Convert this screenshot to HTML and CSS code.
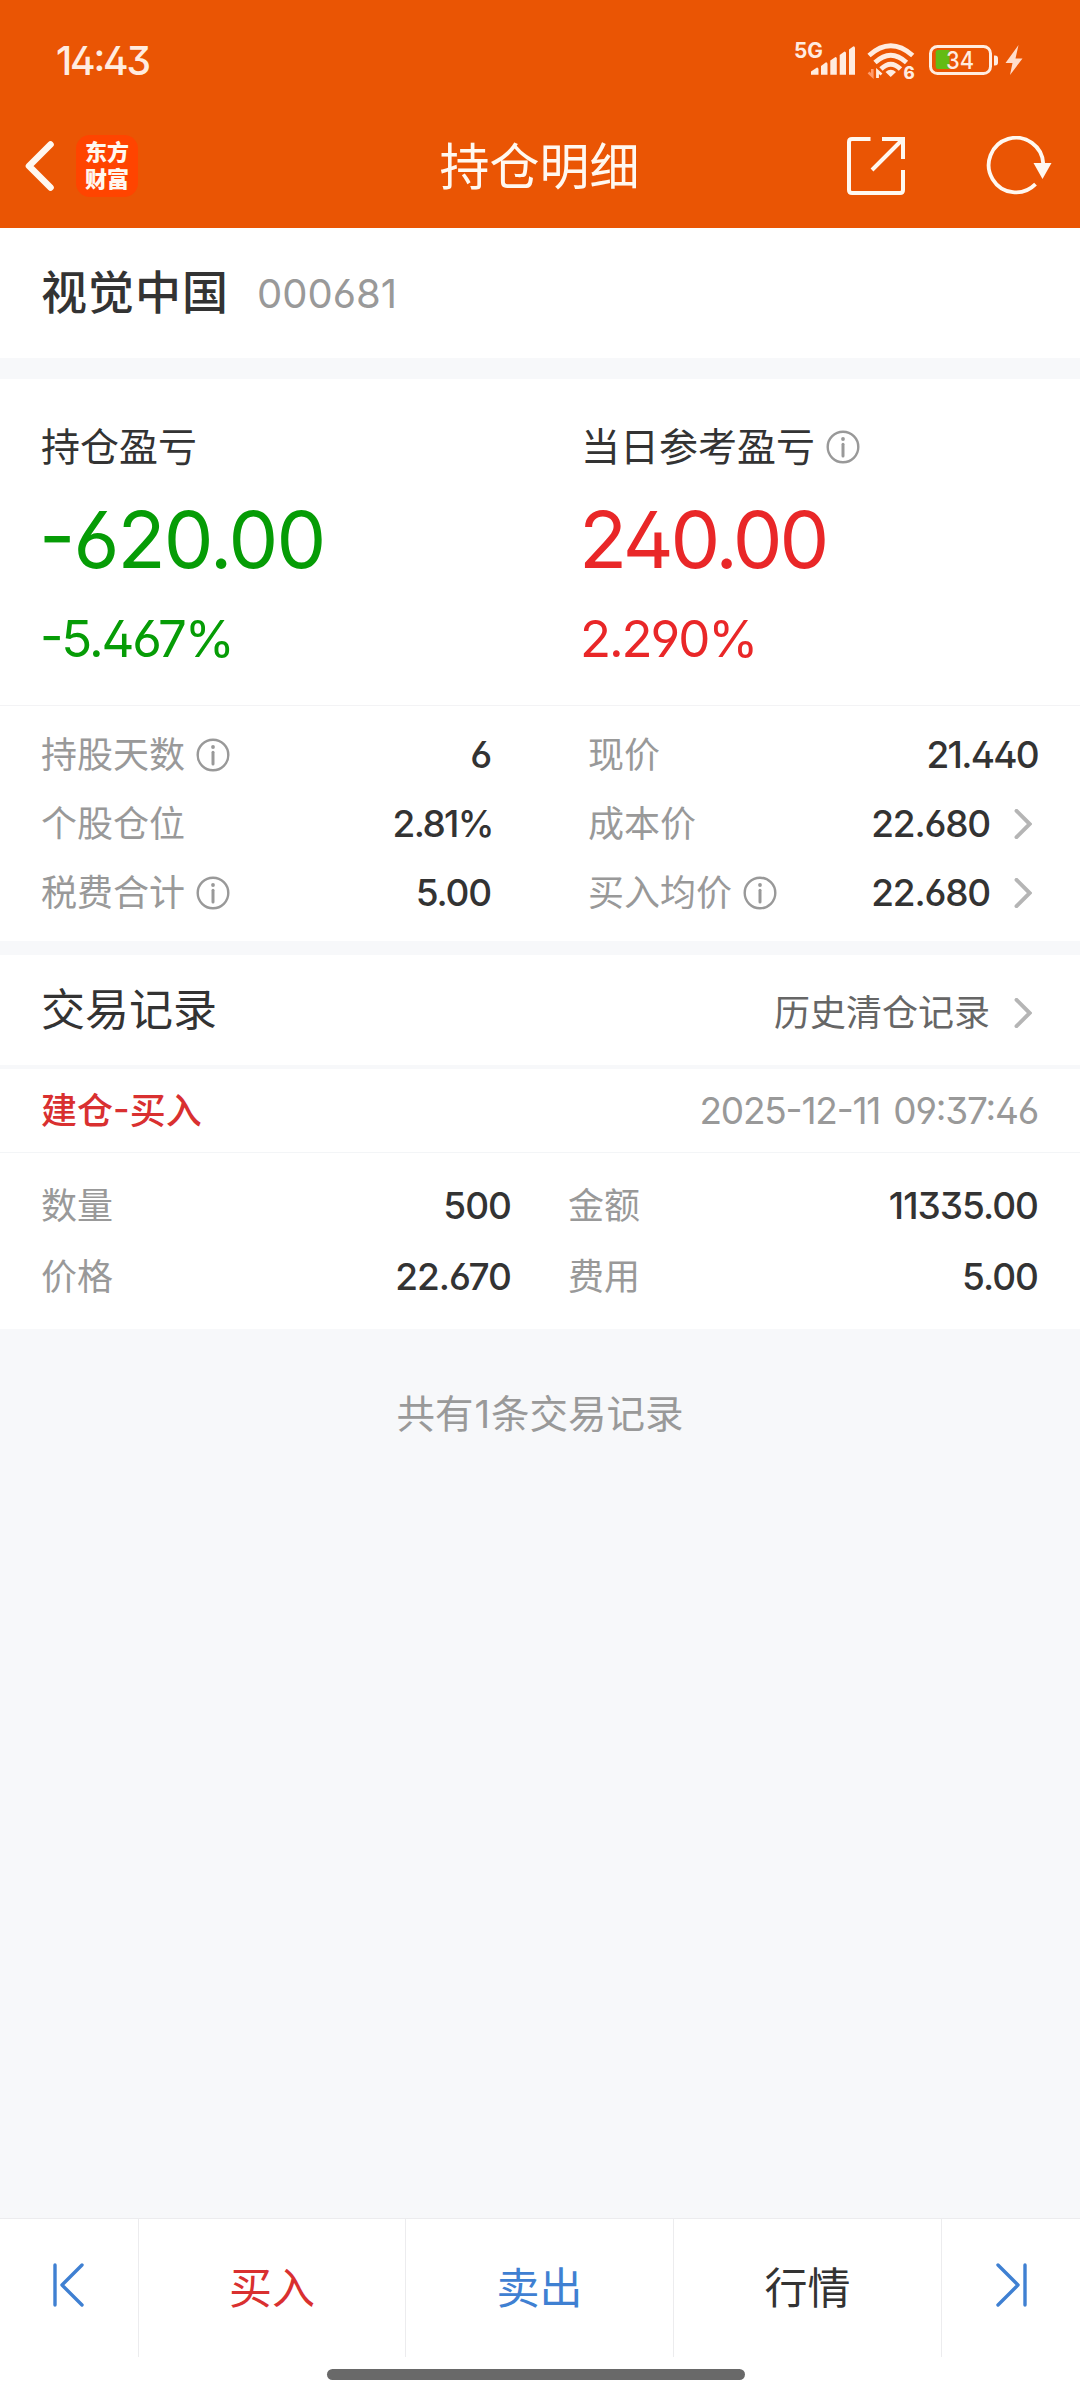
FILE: index.html
```html
<!DOCTYPE html>
<html lang="zh-CN">
<head>
<meta charset="utf-8">
<title>持仓明细</title>
<link rel="stylesheet" href="styles.css">
</head>
<body>
<svg class="defs" width="0" height="0">
  <symbol id="info" viewBox="0 0 34 34"><circle cx="17" cy="17" r="15.3" fill="none" stroke="#999" stroke-width="2.4"/><circle cx="17" cy="9" r="1.9" fill="#999"/><path d="M17 14.2V26" stroke="#999" stroke-width="3" stroke-linecap="round"/></symbol>
  <symbol id="more" viewBox="0 0 18 30"><path d="M2.500 1.800L15.700 15L2.500 28.200" fill="none" stroke="#b5b5b5" stroke-width="3.9" stroke-linecap="round"/></symbol>
</svg>
<div class="screen">
  <header class="top">
    <div class="status">
      <span class="time num">14:43</span>
      <svg class="status-icons" width="235" height="54" viewBox="0 0 235 54">
        <text class="net" x="4" y="22" textLength="29" lengthAdjust="spacingAndGlyphs">5G</text>
        <text class="wifi-gen" x="113.500" y="42.500">6</text>
        <g transform="translate(-790 -36)">
          <g fill="#ffece0">
            <path d="M811 74.7V71.5L817 67.5Q818.5 67.5 818.5 69.500V74.7z"/>
            <path d="M821 74.7V66L826 62.3Q827.500 62.3 827.500 64V74.7z"/>
            <path d="M830.300 74.7V60.500L835.500 57Q836.800 57 836.800 58.500V74.7z"/>
            <path d="M839.700 74.7V55L844.500 51.500Q846 51.500 846 53V74.7z"/>
            <path d="M849 74.7V49.500L853.500 46.200Q855 46.200 855 48V74.7z"/>
          </g>
          <g fill="none" stroke="#ffece0" stroke-width="4.800">
            <path d="M869 55.500Q890.700 36 912.700 55.500"/>
            <path d="M875 62.500Q890.700 48 906.500 62.500"/>
            <path d="M881 69Q890.700 59.500 900.500 69"/>
          </g>
          <path d="M885.500 72Q890.700 67.500 896 72L890.700 77z" fill="#ffece0"/>
          <path d="M872.300 69V76L868.500 72.500" fill="none" stroke="#ff9b6b" stroke-width="2.600"/>
          <path d="M877.500 78V71L881.500 74.500" fill="none" stroke="#ffece0" stroke-width="2.800"/>
          <rect x="930.500" y="46.500" width="60" height="27" rx="7" fill="none" stroke="#ffece0" stroke-width="3"/>
          <path d="M938 50H949.500V69H938Q935.700 69 935.700 66.700V52.300Q935.700 50 938 50z" fill="#63bb14"/>
          <path d="M994 55.500H995Q998 55.500 998 58.500V62.500Q998 65.500 995 65.500H994z" fill="#ffece0"/>
          <path d="M1018.500 45L1005.500 63H1012.500L1010 75L1022.500 58.500H1015.500z" fill="#ffdccb"/>
        </g>
        <text class="level" x="156" y="33.300" textLength="28" lengthAdjust="spacingAndGlyphs">34</text>
      </svg>
    </div>
    <div class="nav">
      <div class="nav-left">
        <svg width="34" height="54" viewBox="0 0 34 54"><path d="M28.500 5.500L7 27L28.500 48.500" fill="none" stroke="#fff8f0" stroke-width="6.600" stroke-linecap="round" stroke-linejoin="round"/></svg>
        <div class="logo"><span>东方</span><span>财富</span></div>
      </div>
      <h1>持仓明细</h1>
      <div class="nav-right">
        <svg width="58" height="58" viewBox="0 0 58 58" fill="none" stroke="#fff8f0" stroke-width="4"><path d="M23.500 2H5Q2 2 2 5V53Q2 56 5 56H53Q56 56 56 53V33"/><path d="M35 2H56V22M55 3L25 33"/></svg>
        <svg width="68" height="60" viewBox="0 0 68 60"><path d="M49.500 48.200A27.300 27.300 0 1 1 57.300 28" fill="none" stroke="#fff8f0" stroke-width="3.800"/><path d="M47.500 27H65.500L56.500 43z" fill="#fff8f0"/></svg>
      </div>
    </div>
  </header>

  <section class="stock"><span class="stock-name">视觉中国</span><span class="stock-code num">000681</span></section>

  <section class="profit">
    <div class="profit-col down">
      <div class="profit-label">持仓盈亏</div>
      <div class="amount num">-620.00</div>
      <div class="percent num">-5.467%</div>
    </div>
    <div class="profit-col up">
      <div class="profit-label">当日参考盈亏<svg class="info"><use href="#info"/></svg></div>
      <div class="amount num">240.00</div>
      <div class="percent num">2.290%</div>
    </div>
  </section>

  <section class="details">
    <div class="row"><span class="label">持股天数</span><svg class="info"><use href="#info"/></svg><span class="value num">6</span></div>
    <div class="row"><span class="label">现价</span><span class="value num">21.440</span></div>
    <div class="row"><span class="label">个股仓位</span><span class="value rate num">2.81%</span></div>
    <div class="row"><span class="label">成本价</span><span class="value num">22.680</span><svg class="more"><use href="#more"/></svg></div>
    <div class="row"><span class="label">税费合计</span><svg class="info"><use href="#info"/></svg><span class="value num">5.00</span></div>
    <div class="row"><span class="label">买入均价</span><svg class="info"><use href="#info"/></svg><span class="value num">22.680</span><svg class="more"><use href="#more"/></svg></div>
  </section>

  <section class="records-head"><h2>交易记录</h2><span class="history">历史清仓记录</span><svg class="more"><use href="#more"/></svg></section>

  <section class="record">
    <div class="record-head"><span class="kind">建仓<i class="num">-</i>买入</span><span class="date num">2025-12-11 09:37:46</span></div>
    <div class="record-body">
      <div class="row"><span class="label">数量</span><span class="value num">500</span></div>
      <div class="row"><span class="label">金额</span><span class="value num">11335.00</span></div>
      <div class="row"><span class="label">价格</span><span class="value num">22.670</span></div>
      <div class="row"><span class="label">费用</span><span class="value num">5.00</span></div>
    </div>
  </section>

  <p class="total">共有<span class="num">1</span>条交易记录</p>

  <footer>
    <nav class="tabs">
      <div class="tab"><svg width="34" height="46" viewBox="0 0 34 46" fill="none" stroke="#3f80d2" stroke-width="3.400" stroke-linecap="round" stroke-linejoin="round"><path d="M3 3V43M30 3L10 23L30 43"/></svg></div>
      <div class="tab buy">买入</div>
      <div class="tab sell">卖出</div>
      <div class="tab">行情</div>
      <div class="tab"><svg width="34" height="46" viewBox="0 0 34 46" fill="none" stroke="#3f80d2" stroke-width="3.400" stroke-linecap="round" stroke-linejoin="round"><path d="M31 3V43M4 3L24 23L4 43"/></svg></div>
    </nav>
    <div class="home"></div>
  </footer>
</div>
</body>
</html>
```
FILE: styles.css
```css
* { box-sizing: border-box; }
body { margin: 0; font-family: "Noto Sans CJK SC", sans-serif; color: #333; }
h1, h2, p { margin: 0; font-weight: 400; }
.defs { position: absolute; }
.num { font-family: Inter, "Liberation Sans", sans-serif; font-feature-settings: "ss01" 1, "case" 1; }
.screen { width: 1080px; height: 2400px; display: flex; flex-direction: column; background: #f7f8fa; }

.top { height: 228px; background: #ea5504; color: #fff8f0; }
.status { height: 120px; padding: 0 55px 0 56px; display: flex; justify-content: space-between; }
.time { font-size: 39px; line-height: 121px; font-weight: 500; color: #ffece0; letter-spacing: -2.2px; }
.status-icons { margin-top: 36px; }
.status-icons text { font-family: Inter, sans-serif; fill: #ffece0; }
.net { font-size: 21px; font-weight: 700; }
.wifi-gen { font-size: 17px; font-weight: 800; }
.level { font-size: 24px; font-weight: 500; }
.nav { height: 108px; padding: 0 26px 16px 22px; display: grid; grid-template-columns: 1fr auto 1fr; align-items: center; }
.nav-left { display: flex; align-items: center; gap: 20px; }
.logo { width: 62px; height: 62px; border-radius: 14px; background: #ff4400; display: flex; flex-direction: column; align-items: center; justify-content: center; font-size: 22px; line-height: 27px; font-weight: 900; padding-bottom: 5px; }
.nav h1 { font-size: 50px; line-height: 86px; padding: 0 0 6px 3px; }
.nav-right { display: flex; align-items: center; justify-content: flex-end; gap: 81px; }

.stock { height: 130px; padding: 0 41px; background: #fff; display: flex; align-items: center; gap: 28px; }
.stock-name { font-size: 46px; font-weight: 500; letter-spacing: 1px; padding-bottom: 8px; }
.stock-code { font-size: 40px; color: #999; }

.profit { margin-top: 21px; height: 327px; padding: 41px 41px 0; background: #fff; border-bottom: 1px solid #f3f3f5; display: grid; grid-template-columns: 540px 1fr; }
.profit-label { height: 52px; font-size: 39px; line-height: 52px; display: flex; align-items: center; padding-bottom: 4px; }
.profit-label .info { margin: 5px 0 0 11px; }
.amount { font-size: 79px; line-height: 90px; margin: 22px 0 0 -2px; letter-spacing: -3.2px; }
.down .amount { letter-spacing: -1.900px; }
.percent { font-size: 51px; line-height: 60px; margin: 25px 0 0 -1px; letter-spacing: -2.1px; }
.down .num { color: #069c06; }
.up .num { color: #e92728; }
.info { width: 34px; height: 34px; flex: none; }
.more { width: 18px; height: 30px; flex: none; margin: 0 6px 0 24px; }

.row { height: 69px; display: flex; align-items: center; }
.label { font-size: 36px; color: #999; padding-bottom: 5px; margin-left: -1px; }
.row .info { margin-left: 11px; }
.value { margin-left: auto; font-size: 37px; font-weight: 450; letter-spacing: -1.2px; }
.value.rate { letter-spacing: -1.6px; margin-right: -2px; }
.details { height: 235px; padding: 14px 42px; background: #fff; display: grid; grid-template-columns: 449px 449px; column-gap: 98px; }
.details .row:nth-child(2) .value { letter-spacing: -1.700px; }

.records-head { margin-top: 14px; height: 110px; padding: 0 42px 0 41px; background: #fff; display: flex; align-items: center; }
.records-head h2 { font-size: 44px; padding-bottom: 7px; flex: 1; }
.records-head .more { margin-top: 5px; }
.history { font-size: 36px; color: #666; }

.record { margin-top: 4px; height: 260px; background: #fff; }
.record-head { height: 84px; padding: 0 42px 0 41px; border-bottom: 1px solid #f3f5f7; display: flex; align-items: center; justify-content: space-between; }
.kind { font-size: 36px; font-weight: 500; color: #d93030; padding-bottom: 6px; }
.kind i { font-style: normal; }
.date { font-size: 37px; color: #999; letter-spacing: -1.2px; word-spacing: 4px; }
.record-body { padding: 17px 42px; display: grid; grid-template-columns: 469px 469px; column-gap: 58px; }
.record-body .row { height: 71px; }
.record-body .value { letter-spacing: -1px; }

.total { margin-top: 56px; text-align: center; font-size: 38.500px; line-height: 52px; color: #999; }
.total .num { margin: 0 1px; }

footer { margin-top: auto; height: 182px; background: #fff; border-top: 1px solid #ececee; }
.tabs { height: 138px; display: grid; grid-template-columns: 139px 267px 268px 268px 1fr; }
.tab { display: flex; align-items: center; justify-content: center; font-size: 43px; border-right: 1px solid #ececee; padding-bottom: 6px; }
.tab:last-child { border-right: 0; }
.buy { color: #d93030; }
.sell { color: #3f80d2; }
.home { width: 418px; height: 11px; margin: 12px 0 0 327px; border-radius: 5.500px; background: #696969; }
```
